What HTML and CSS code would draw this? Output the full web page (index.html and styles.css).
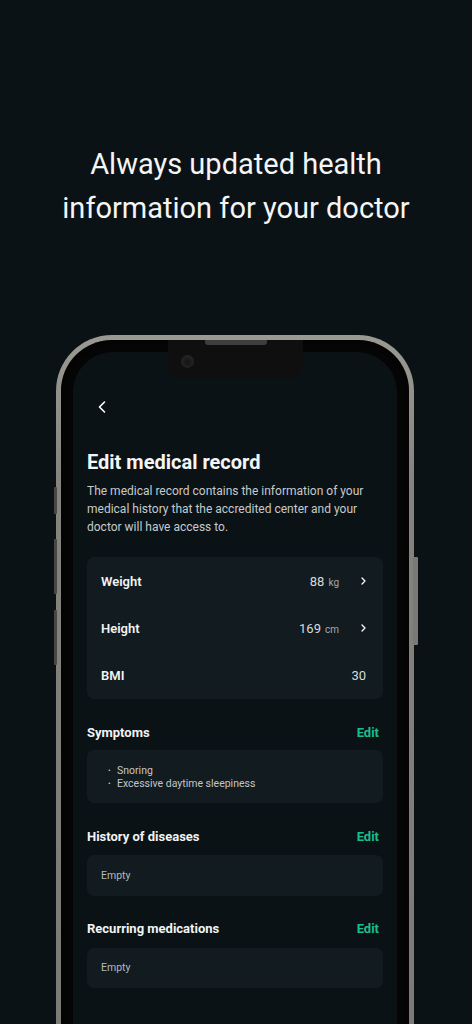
FILE: index.html
```html
<!DOCTYPE html>
<html lang="en">
<head>
<meta charset="utf-8">
<title>Edit medical record</title>
<link rel="stylesheet" href="styles.css">
</head>
<body>
<div class="page">
  <h1 class="hero">Always updated health<br>information for your doctor</h1>

  <div class="phone">
    <span class="btn btn-l1"></span>
    <span class="btn btn-l2"></span>
    <span class="btn btn-l3"></span>
    <span class="btn btn-r"></span>
    <div class="bezel">
      <div class="notch">
        <span class="speaker"></span>
        <span class="camera"></span>
      </div>
      <div class="screen">
        <div class="nav">
          <svg class="back" width="12" height="12" viewBox="0 0 12 12"><path d="M8.5 1 L3.5 6 L8.5 11" fill="none" stroke="#ffffff" stroke-width="1.6" stroke-linecap="round" stroke-linejoin="round"/></svg>
        </div>
        <h2 class="title">Edit medical record</h2>
        <p class="desc">The medical record contains the information of your medical history that the accredited center and your doctor will have access to.</p>

        <div class="card metrics">
          <div class="row">
            <span class="label row-label">Weight</span>
            <span class="value">88<span class="unit">kg</span></span>
            <svg class="chev" width="5" height="8" viewBox="0 0 5 8"><path d="M1 1 L4 4 L1 7" fill="none" stroke="#ffffff" stroke-width="1.3" stroke-linecap="round" stroke-linejoin="round"/></svg>
          </div>
          <div class="row">
            <span class="label row-label">Height</span>
            <span class="value">169<span class="unit">cm</span></span>
            <svg class="chev" width="5" height="8" viewBox="0 0 5 8"><path d="M1 1 L4 4 L1 7" fill="none" stroke="#ffffff" stroke-width="1.3" stroke-linecap="round" stroke-linejoin="round"/></svg>
          </div>
          <div class="row">
            <span class="label row-label">BMI</span>
            <span class="value">30</span>
          </div>
        </div>

        <div class="section-head">
          <span class="label">Symptoms</span>
          <span class="edit">Edit</span>
        </div>
        <div class="card list">
          <div class="item"><span class="dot">•</span>Snoring</div>
          <div class="item"><span class="dot">•</span>Excessive daytime sleepiness</div>
        </div>

        <div class="section-head">
          <span class="label">History of diseases</span>
          <span class="edit">Edit</span>
        </div>
        <div class="card empty">Empty</div>

        <div class="section-head">
          <span class="label">Recurring medications</span>
          <span class="edit">Edit</span>
        </div>
        <div class="card empty">Empty</div>
      </div>
    </div>
  </div>
</div>
</body>
</html>
```

FILE: styles.css
```css
* { box-sizing: border-box; }

html, body {
  margin: 0;
  padding: 0;
  background: #0b1216;
}

body {
  width: 472px;
  height: 1024px;
  overflow: hidden;
  font-family: Roboto, "Noto Sans", "Liberation Sans", sans-serif;
  color: #f2f3f3;
}

.page {
  display: flex;
  flex-direction: column;
}

.hero {
  margin: 142px 0 0;
  text-align: center;
  font-size: 29px;
  line-height: 44px;
  font-weight: 400;
  color: #f4f5f5;
}

.phone {
  position: relative;
  margin: 105px 0 0 56px;
  width: 358px;
  height: 760px;
  padding: 5px;
  border-radius: 56px;
  background: linear-gradient(180deg, #9a9992 0%, #84837d 20%, #7a7973 100%);
}

.btn {
  position: absolute;
  background: #4a4742;
  border-radius: 1px;
}
.btn-l1 { left: -2px; top: 152px; width: 3px; height: 27px; }
.btn-l2 { left: -2px; top: 204px; width: 3px; height: 55px; }
.btn-l3 { left: -2px; top: 275px; width: 3px; height: 55px; }
.btn-r { right: -4px; top: 222px; width: 5px; height: 88px; background: #7a7a74; }

.bezel {
  position: relative;
  height: 100%;
  padding: 12px;
  border-radius: 51px;
  background: #050505;
  box-shadow: inset 0 0 4px rgba(0,0,0,0.9);
}

.notch {
  position: absolute;
  left: 107px;
  top: 0;
  width: 135px;
  height: 38px;
  background: #0f0f0f;
  border-radius: 0 0 13px 13px;
  z-index: 2;
}
.speaker {
  position: absolute;
  left: 37px;
  top: 0;
  width: 62px;
  height: 5px;
  border-radius: 0 0 3px 3px;
  background: #3d3d3d;
}
.camera {
  position: absolute;
  left: 13px;
  top: 15px;
  width: 13px;
  height: 13px;
  border-radius: 50%;
  background: radial-gradient(circle at 50% 55%, #141414 0%, #222 60%, #2c2c2c 100%);
}

.screen {
  height: 100%;
  border-radius: 40px;
  background: #0a1216;
  padding: 44px 14px 0;
  display: flex;
  flex-direction: column;
}

.nav {
  height: 22px;
  display: flex;
  align-items: center;
  padding-left: 9px;
}
.back { display: block; }

.title {
  margin: 32px 0 0;
  font-size: 20px;
  line-height: 24px;
  font-weight: 700;
  color: #f4f5f5;
}

.desc {
  margin: 8px 0 0;
  font-size: 12px;
  line-height: 18px;
  color: #c6cacc;
}

.card {
  background: #121b20;
  border-radius: 7px;
}

.metrics {
  margin-top: 21px;
  padding: 0.5px 0;
}

.row {
  height: 47px;
  display: flex;
  align-items: center;
  padding: 0 17px 0 14px;
}

.label {
  font-size: 13px;
  font-weight: 700;
  color: #f2f3f3;
}
.row-label {
  font-weight: 600;
}

.value {
  margin-left: auto;
  font-size: 13px;
  color: #d8dbdc;
}
.unit {
  font-size: 10px;
  color: #a4a9ab;
  margin-left: 4px;
}
.chev {
  margin-left: 22px;
  display: block;
}

.section-head {
  margin-top: 23px;
  height: 20px;
  display: flex;
  align-items: center;
  justify-content: space-between;
  padding-right: 4px;
}
.edit {
  font-size: 13px;
  font-weight: 700;
  color: #19bf8c;
}

.list {
  margin-top: 8px;
  padding: 13.5px 14px 13.5px 21px;
}
.item {
  font-size: 10.5px;
  line-height: 13px;
  color: #c2c6c8;
  display: flex;
}
.dot {
  width: 9px;
  font-size: 8px;
}

.empty {
  margin-top: 9px;
  height: 40.5px;
  display: flex;
  align-items: center;
  padding: 0 14px;
  font-size: 10.5px;
  color: #b4b9bb;
}
```
